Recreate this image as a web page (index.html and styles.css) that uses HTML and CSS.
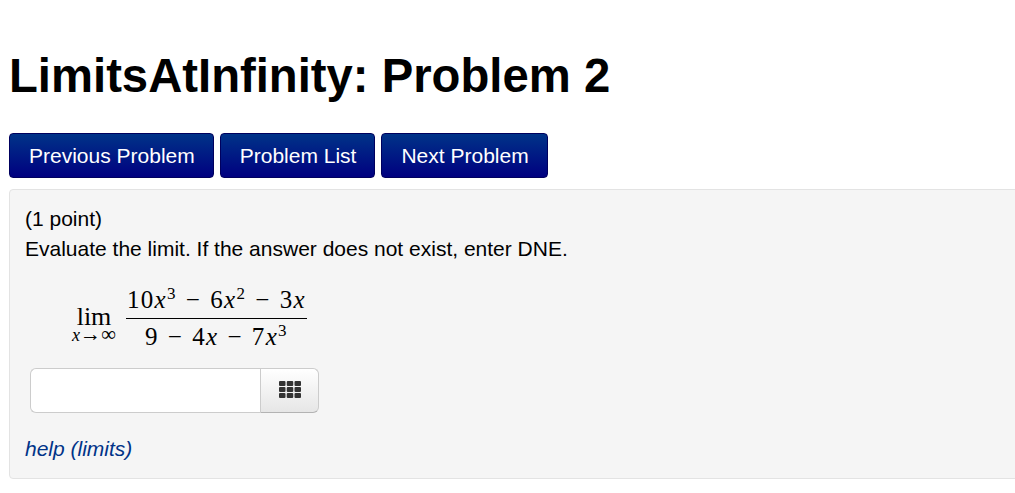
FILE: index.html
```html
<!DOCTYPE html>
<html>

<head>
    <title>LimitsAtInfinity: Problem 2</title>
    <meta name="viewport" content="width=device-width, initial-scale=1">
    <link rel="stylesheet" href="styles.css">
</head>

<body>

    <h1>LimitsAtInfinity: Problem 2</h1>

    <div class="nav-buttons">
        <a class="nav-button" href="#">Previous Problem</a>
        <a class="nav-button" href="#">Problem List</a>
        <a class="nav-button" href="#">Next Problem</a>
    </div>

    <div class="problem">
        <div class="problem-text">(1 point)</div>
        <div class="problem-text">Evaluate the limit. If the answer does not exist, enter DNE.</div>

        <div class="math">
            <span class="limit">
                <span class="lim">lim</span>
                <span class="lim-under"><i>x</i><span class="arrow">→∞</span></span>
            </span>
            <span class="fraction">
                <span class="numerator">10<i>x</i><sup>3</sup><span class="op">−</span>6<i>x</i><sup>2</sup><span class="op">−</span>3<i>x</i></span>
                <span class="denominator">9<span class="op">−</span>4<i>x</i><span class="op">−</span>7<i>x</i><sup>3</sup></span>
            </span>
        </div>

        <div class="answer">
            <input type="text" class="answer-input">
            <button type="button" class="answer-button">
                <svg width="22" height="17" viewBox="0 0 22 17">
                    <g fill="#333">
                        <rect x="0" y="0" width="6.5" height="5" rx="1"/>
                        <rect x="7.75" y="0" width="6.5" height="5" rx="1"/>
                        <rect x="15.5" y="0" width="6.5" height="5" rx="1"/>
                        <rect x="0" y="6" width="6.5" height="5" rx="1"/>
                        <rect x="7.75" y="6" width="6.5" height="5" rx="1"/>
                        <rect x="15.5" y="6" width="6.5" height="5" rx="1"/>
                        <rect x="0" y="12" width="6.5" height="5" rx="1"/>
                        <rect x="7.75" y="12" width="6.5" height="5" rx="1"/>
                        <rect x="15.5" y="12" width="6.5" height="5" rx="1"/>
                    </g>
                </svg>
            </button>
        </div>

        <a class="help" href="#">help (limits)</a>
    </div>

</body>

</html>
```

FILE: styles.css
```css
html {
    overflow: hidden;
}

body {
    margin: 0;
    padding: 0 0 0 9px;
    background-color: #fff;
    color: #000;
    font-family: "Liberation Sans", Arial, sans-serif;
    font-size: 21px;
    overflow: hidden;
}

h1 {
    margin: 0;
    padding-top: 49px;
    font-size: 47.25px;
    line-height: 54px;
    font-weight: bold;
}

.nav-buttons {
    display: flex;
    gap: 6px;
    margin-top: 30px;
}

.nav-button {
    display: block;
    height: 45px;
    box-sizing: border-box;
    padding: 0 18px 0 19px;
    line-height: 43px;
    font-size: 21px;
    color: #fff;
    text-decoration: none;
    background-image: linear-gradient(to bottom, #003388, #000080);
    border: 1px solid #00005e;
    border-radius: 4px;
}

.problem {
    margin-top: 11px;
    margin-right: -20px;
    height: 290px;
    box-sizing: border-box;
    padding: 14px 15px 0;
    background-color: #f5f5f5;
    border: 1px solid #e3e3e3;
    border-radius: 4px;
}

.problem-text {
    line-height: 30px;
}

.math {
    display: flex;
    align-items: center;
    margin: 18px 0 0 47px;
    font-family: "Liberation Serif", "Times New Roman", serif;
    font-size: 25px;
}

.limit {
    display: flex;
    flex-direction: column;
    align-items: center;
    margin-right: 10px;
    padding-top: 13px;
}

.lim {
    line-height: 20px;
    font-size: 26px;
}

.lim-under {
    line-height: 15px;
    font-size: 18px;
}

.arrow {
    font-size: 21px;
    line-height: 15px;
}

.fraction {
    display: flex;
    flex-direction: column;
    align-items: center;
    letter-spacing: 1.3px;
}

.numerator,
.denominator {
    line-height: 36px;
    white-space: nowrap;
}

.numerator {
    border-bottom: 1px solid #000;
    padding: 0 1px;
}

.op {
    margin: 0 9px;
}

sup {
    font-size: 17px;
    line-height: 0;
}

.answer {
    display: flex;
    width: 289px;
    height: 45px;
    margin: 13px 0 0 5px;
}

.answer-input {
    flex: 1;
    min-width: 0;
    box-sizing: border-box;
    background-color: #fff;
    border: 1px solid #ccc;
    border-right: none;
    border-radius: 6px 0 0 6px;
}

.answer-button {
    width: 59px;
    padding: 0;
    background-image: linear-gradient(to bottom, #fff, #e6e6e6);
    border: 1px solid #ccc;
    border-bottom-color: #b3b3b3;
    border-radius: 0 6px 6px 0;
}

.answer-button svg {
    display: block;
    margin: -3px auto 0;
}

.help {
    display: block;
    margin-top: 22px;
    font-style: italic;
    color: #003388;
    text-decoration: none;
    line-height: 28px;
}
```
